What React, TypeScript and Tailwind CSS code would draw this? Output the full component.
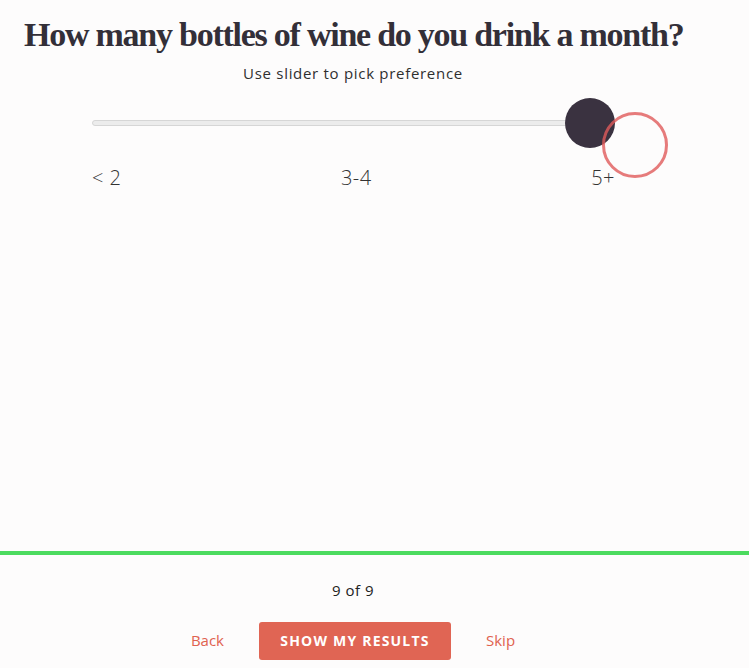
const labels = ['< 2', '3-4', '5+'];

const App = () => {
  return (
    <div className="flex h-screen w-full flex-col bg-[#fdfcfc] text-[#332f38]" style={{ fontFamily: '"Open Sans", Lato, sans-serif' }}>
      <main className="flex-1 w-[706px]">
        <h1 className="pl-6 pt-[14px] text-[34px] font-bold leading-[42px] tracking-[-1.25px] text-[#332f38]" style={{ fontFamily: '"Liberation Serif", serif' }}>
          How many bottles of wine do you drink a month?
        </h1>
        <p className="mt-[6px] text-center text-[15px] tracking-[0.7px] text-[#2f2f2f]">Use slider to pick preference</p>

        <div className="ml-[92px] mt-[13px] w-[523px]">
          <div className="relative flex h-[50px] items-center">
            <div className="h-[6px] w-full rounded-full border border-[#d6d6d6] bg-[#ececec]" />
            <div className="absolute right-0 top-0 h-[50px] w-[50px] rounded-full bg-[#3a3240]" />
            <div className="absolute left-[510px] top-[14px] h-[66px] w-[66px] rounded-full border-[3px] border-[#e05a5a]/80" />
          </div>
          <div className="mt-[15px] flex justify-between text-[20px] font-light tracking-[0.5px] text-[#333]">
            {labels.map((label) => (
              <span key={label}>{label}</span>
            ))}
          </div>
        </div>
      </main>

      <footer className="h-[117px] w-full border-t-[4px] border-[#4cdb5f]">
        <div className="flex w-[706px] flex-col items-center">
          <p className="mt-[24px] text-[15px] tracking-[0.5px] text-[#222]">9 of 9</p>
          <div className="mt-[20px] flex items-center">
            <button className="px-[35px] text-[15px] text-[#e0624f]">Back</button>
            <button className="h-[38px] w-[192px] rounded-[3px] bg-[#e06554] text-[14px] font-bold tracking-[1.2px] text-white">SHOW MY RESULTS</button>
            <button className="px-[35px] text-[15px] text-[#e0624f]">Skip</button>
          </div>
        </div>
      </footer>
    </div>
  );
};

export default App;
